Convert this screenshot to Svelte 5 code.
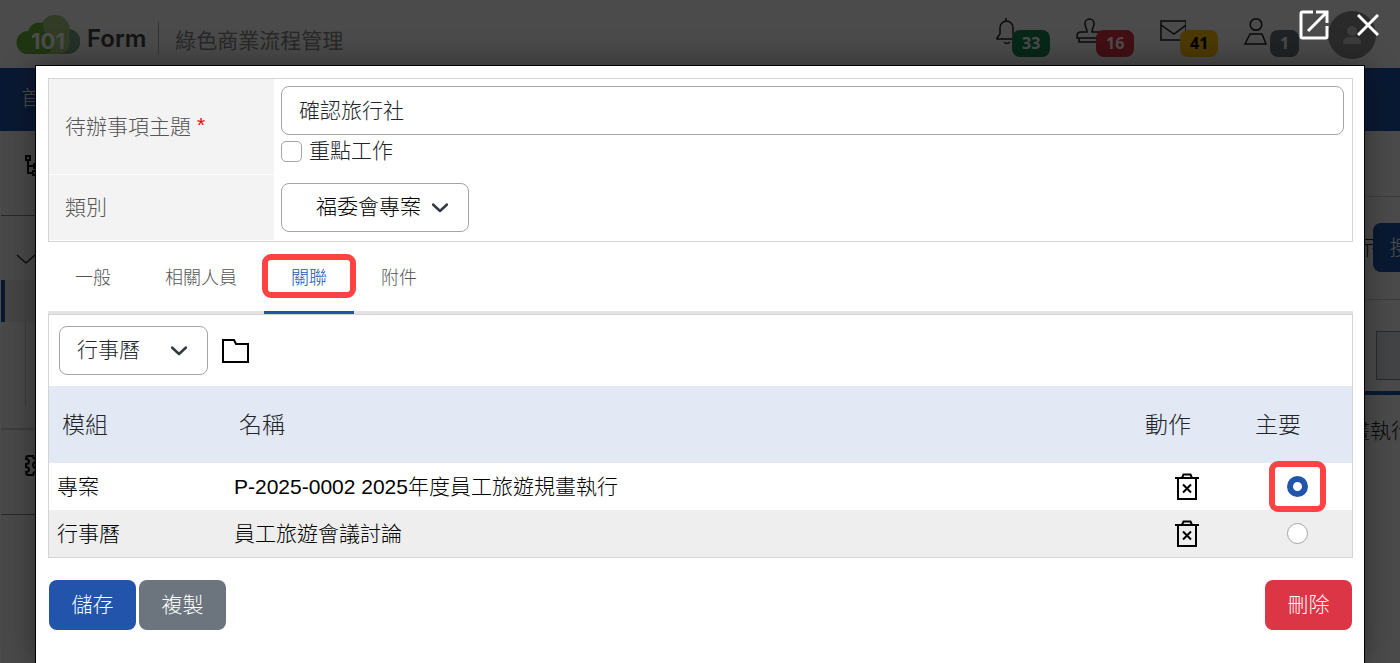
<script>
  const notices = [
    { icon: 'bell', label: '通知', count: 33, tone: 'green', width: 28 },
    { icon: 'stamp', label: '簽核', count: 16, tone: 'red', width: 28 },
    { icon: 'mail', label: '訊息', count: 41, tone: 'yellow', width: 28 },
    { icon: 'user', label: '線上人員', count: 1, tone: 'gray', width: 34 }
  ];

  const tabs = ['一般', '相關人員', '關聯', '附件'];
  let activeTab = $state('關聯');

  let subject = $state('確認旅行社');
  let important = $state(false);
  let category = $state('福委會專案');
  let moduleType = $state('行事曆');

  let links = $state([
    { id: 1, module: '專案', name: 'P-2025-0002 2025年度員工旅遊規畫執行' },
    { id: 2, module: '行事曆', name: '員工旅遊會議討論' }
  ]);
  let mainLink = $state(1);

  function removeLink(id) {
    links = links.filter((l) => l.id !== id);
  }
</script>

<div class="page">
  <header>
    <svg class="logo" viewBox="0 0 64 40" aria-hidden="true">
      <path d="M46 14h6a12 12 0 0 1 0 25H28z" fill="#7ba585" />
      <circle cx="39" cy="15" r="15" fill="#a3c77d" />
      <rect x="24" y="15" width="30" height="24" rx="12" fill="#a3c77d" />
      <path d="M12 39a11.500 11.500 0 0 1 0-23 12 12 0 0 1 15-8c0 8 4 13 9 17v4q0 10-8 10z" fill="#6cb33f" />
      <text x="32" y="34" text-anchor="middle">101</text>
    </svg>
    <span class="brand">Form</span>
    <span class="slogan">綠色商業流程管理</span>
    <div class="notices">
      {#each notices as n}
        <button type="button" class="notice" aria-label={n.label}>
          <svg width={n.width} height="28" viewBox="0 0 {n.width} 28" fill="none" stroke="#222" stroke-width="1.5">
            {#if n.icon === 'bell'}
              <path d="M16 1v3M7 22v-1l3-4v-6a6.500 7 0 0 1 13 0v6l3 4v1zM14 25q3 3 6 0" />
            {:else if n.icon === 'stamp'}
              <path d="M13 15c0-4-2-5-2-8.500a4.500 4.500 0 0 1 9 0c0 3.500-2 4.500-2 8.500h8q2 0 2 3v3H3v-2q0-4 4-4zM5 21v4h22v-4" />
            {:else if n.icon === 'mail'}
              <path d="M3 4h25v19H3zM3 8l13 9 12-9" />
            {:else}
              <path d="M8 17h12l4 10H3z" />
              <circle cx="14" cy="7.500" r="5.800" />
            {/if}
          </svg>
          <span class="badge {n.tone}">{n.count}</span>
        </button>
      {/each}
    </div>
    <div class="avatar">
      <svg width="48" height="48" viewBox="0 0 48 48" fill="#c8c8cc">
        <circle cx="24" cy="20" r="5" />
        <path d="M15 33v-2c0-4 5-5 9-5s9 1 9 5v2z" />
      </svg>
    </div>
  </header>
  <nav><a href="#home">首頁</a></nav>
  <div class="body">
    <aside>
      <div class="side-item">
        <svg width="28" height="28" viewBox="0 0 28 28" fill="none" stroke="#111" stroke-width="2">
          <path d="M3 4h4v4H3zM10 19h4v4h-4zM5 8v13h5M5 14h5M11 12h4v4h-4zM12 6h10" />
        </svg>
      </div>
      <div class="side-tree">
        <svg width="20" height="12" viewBox="0 0 20 12" fill="none" stroke="#333" stroke-width="1.500">
          <path d="M1 2l9 8 9-8" />
        </svg>
        <div class="current"></div>
        <div class="branch"></div>
      </div>
      <div class="side-item">
        <svg width="28" height="28" viewBox="0 0 28 28" fill="none" stroke="#111" stroke-width="2">
          <path d="M10 5H5q-2 0-2 3 3 0 3 2.500T3 13v3q3 0 3 2.500T3 21q0 3 2 3h5q0-3 3-3t3 3h5v-5q-3 0-3-3v-2q0-3 3-3V5h-5q0 3-3 3t-3-3z" />
          <circle cx="13" cy="14" r="3" />
        </svg>
      </div>
    </aside>
    <main>
      <div class="blank"></div>
      <div class="search">示<button type="button">搜尋</button></div>
      <div class="tools"><span></span></div>
      <p>規畫執行</p>
    </main>
  </div>
</div>

<div class="overlay">
  <div class="window-tools">
    <button type="button" aria-label="另開視窗">
      <svg width="32" height="32" viewBox="0 0 32 32" fill="none" stroke="#fff" stroke-width="3">
        <path d="M15 3H4.500Q3 3 3 4.500v23Q3 29 4.500 29h23q1.500 0 1.500-1.500V17" />
        <path d="M18 3h11v11M29 3L10 22" />
      </svg>
    </button>
    <button type="button" aria-label="關閉">
      <svg width="22" height="22" viewBox="0 0 22 22" fill="none" stroke="#fff" stroke-width="3">
        <path d="M1 1l20 20M21 1L1 21" />
      </svg>
    </button>
  </div>

  <div class="dialog" role="dialog" aria-label="待辦事項">
    <div class="fields">
      <label class="name" for="subject">待辦事項主題 <span class="required">*</span></label>
      <div class="value">
        <input id="subject" type="text" bind:value={subject} />
        <label class="check"><input type="checkbox" bind:checked={important} /><span>重點工作</span></label>
      </div>
      <label class="name" for="category">類別</label>
      <div class="value">
        <div class="select category">
          <select id="category" bind:value={category}>
            <option>福委會專案</option>
          </select>
          {@render chevron()}
        </div>
      </div>
    </div>

    <div class="tabs" role="tablist">
      {#each tabs as tab}
        <button type="button" role="tab" aria-selected={tab === activeTab} class:active={tab === activeTab} onclick={() => (activeTab = tab)}>
          {tab}
        </button>
      {/each}
    </div>

    <div class="panel">
      <div class="picker">
        <div class="select module">
          <select aria-label="模組" bind:value={moduleType}>
            <option>行事曆</option>
            <option>專案</option>
          </select>
          {@render chevron()}
        </div>
        <button type="button" aria-label="選擇">
          <svg width="27" height="24" viewBox="0 0 27 24" fill="none" stroke="#000" stroke-width="2">
            <path d="M1 1h11l2 4h12v18H1z" />
          </svg>
        </button>
      </div>
      <table>
        <thead>
          <tr>
            <th class="col-module">模組</th>
            <th>名稱</th>
            <th class="col-small">動作</th>
            <th class="col-small">主要</th>
          </tr>
        </thead>
        <tbody>
          {#each links as link (link.id)}
            <tr>
              <td>{link.module}</td>
              <td>{link.name}</td>
              <td class="center">
                <button type="button" aria-label="刪除關聯" onclick={() => removeLink(link.id)}>
                  <svg width="24" height="28" viewBox="0 0 24 28" fill="none" stroke="#000" stroke-width="2">
                    <path d="M0 5h24M7 5l1.500-3.500h7L17 5M3 5v21h18V5M8 11.500l8 8M16 11.500l-8 8" />
                  </svg>
                </button>
              </td>
              <td class="center">
                <span class="main-pick" class:marked={mainLink === link.id}>
                  <input type="radio" name="main" aria-label="主要" value={link.id} bind:group={mainLink} />
                </span>
              </td>
            </tr>
          {/each}
        </tbody>
      </table>
    </div>

    <div class="actions">
      <button type="button" class="save">儲存</button>
      <button type="button" class="copy">複製</button>
      <button type="button" class="delete">刪除</button>
    </div>
  </div>
</div>

{#snippet chevron()}
  <svg class="chevron" width="16" height="10" viewBox="0 0 16 10" fill="none" stroke="#343a40" stroke-width="2.500" stroke-linecap="round" stroke-linejoin="round">
    <path d="M1 1.500l7 6.500 7-6.500" />
  </svg>
{/snippet}

<style>
  :global(body) {
    overflow: hidden;
  }
  .page, .overlay {
    position: fixed;
    inset: 0;
    font-family: "Liberation Sans", "Noto Sans CJK TC", sans-serif;
    font-size: 21px;
    font-weight: 300;
    color: #212529;
  }
  button, input, select {
    font: inherit;
    color: inherit;
    margin: 0;
  }
  button {
    padding: 0;
    border: 0;
    background: none;
    cursor: pointer;
  }
  svg {
    display: block;
    flex: none;
  }

  /* page behind the dialog */
  .page {
    display: flex;
    flex-direction: column;
    overflow: hidden;
    background: #fafafa;
  }
  header {
    display: flex;
    align-items: center;
    height: 68px;
    padding: 2px 24px 0 16px;
    box-sizing: border-box;
  }
  .logo {
    width: 64px;
    height: 40px;
  }
  .logo text {
    font: 700 22px "Inter", sans-serif;
    fill: #fff;
  }
  .brand {
    margin: 6px 0 0 7px;
    padding: 2px 12px 0 0;
    font: 600 24px/30px "Inter", sans-serif;
    color: #444;
    border-right: 1px solid #aaa;
  }
  .slogan {
    margin-left: 16px;
    padding-top: 8px;
    font-weight: 400;
    color: #888;
  }
  .notices {
    display: flex;
    margin-left: auto;
    padding-top: 4px;
  }
  .notice {
    display: flex;
    width: 84px;
    height: 40px;
  }
  .badge {
    align-self: flex-end;
    margin-left: -6px;
    padding: 0 10px;
    border-radius: 8px;
    font: 700 16px/27px "Noto Sans", sans-serif;
    color: #fff;
  }
  .badge.green { background: #198754; }
  .badge.red { background: #dc3545; }
  .badge.yellow { background: #ffc107; color: #000; }
  .badge.gray { background: #6c757d; }
  .avatar {
    margin-left: 2px;
    border-radius: 50%;
    background: #8c8c92;
  }
  nav {
    height: 63px;
    padding-left: 21px;
    line-height: 60px;
    box-sizing: border-box;
    background: #2254ab;
  }
  nav a {
    color: #fff;
    text-decoration: none;
  }
  .body {
    display: flex;
    flex: 1;
  }
  aside {
    width: 260px;
    background: #f4f4f4;
    border-left: 1px solid #fff;
  }
  .side-item {
    display: flex;
    align-items: center;
    height: 85px;
    padding: 0 0 14px 22px;
    box-sizing: border-box;
    border-bottom: 1px solid #888;
  }
  .side-tree {
    border-bottom: 2px solid #ccc;
  }
  .side-tree svg {
    margin: 37px 0 15px 15px;
  }
  .current {
    height: 42px;
    border-left: 4px solid #2254ab;
    background: #e6e6e6;
  }
  .branch {
    height: 84px;
    margin: 0 0 22px 24px;
    border-left: 1px solid #ccc;
  }
  main {
    flex: 1;
    margin-right: -48px;
    text-align: right;
  }
  .blank {
    height: 65px;
    border-bottom: 1px solid #ccc;
  }
  .search {
    height: 102px;
    line-height: 102px;
    border-bottom: 1px solid #ccc;
  }
  .search button {
    width: 75px;
    height: 49px;
    margin-left: -5px;
    line-height: 49px;
    border-radius: 8px;
    background: #2254ab;
    color: #fff;
  }
  .tools {
    display: flex;
    justify-content: flex-end;
    padding: 31px 0 11px;
    border-bottom: 4px solid #2254ab;
  }
  .tools span {
    width: 70px;
    height: 47px;
    border: 1px solid #888f99;
    background: #dfe3ea;
  }
  p {
    margin: 0;
    padding: 19px 36px 0 0;
  }

  /* dialog */
  .overlay {
    display: flex;
    flex-direction: column;
    padding: 0 35px;
    background: rgba(0, 0, 0, 0.7);
  }
  .window-tools {
    display: flex;
    justify-content: flex-end;
    align-items: center;
    flex: none;
    gap: 27px;
    height: 49px;
    margin: 0 -14px 16px 0;
  }
  .dialog {
    flex: 1;
    padding: 12px 11px 12px 12px;
    border: 1px solid #000;
    border-bottom: 0;
    background: #fff;
    box-shadow: 0 0 30px rgba(0, 0, 0, 0.4);
  }
  .fields {
    display: grid;
    grid-template-columns: 225px 1fr;
    row-gap: 1px;
    padding-bottom: 1px;
    border: 1px solid #d3d4d8;
  }
  .name {
    display: flex;
    align-items: center;
    gap: 6px;
    padding: 0 0 4px 16px;
    background: #f3f3f3;
    color: #555;
  }
  .required {
    color: #f00;
  }
  .value {
    padding: 7px 8px 7px 7px;
  }
  .value:last-child {
    padding: 8px 7px;
  }
  .value input[type='text'] {
    display: block;
    width: 100%;
    height: 49px;
    padding: 0 17px 4px;
    box-sizing: border-box;
    border: 1px solid #a5a5a8;
    border-radius: 8px;
  }
  .check {
    display: flex;
    align-items: center;
    gap: 7px;
    height: 32px;
  }
  .check span {
    padding-bottom: 4px;
  }
  input[type='checkbox'], input[type='radio'] {
    appearance: none;
    width: 21px;
    height: 21px;
    border: 1px solid #a5a5a8;
    border-radius: 5px;
    background: #fff;
  }
  input[type='checkbox']:checked {
    background: #2254ab;
  }
  input[type='radio'] {
    display: block;
    border-radius: 50%;
  }
  input[type='radio']:checked {
    border: 6px solid #2254ab;
  }
  .select {
    display: grid;
    align-items: center;
    height: 49px;
  }
  .select select, .chevron {
    grid-area: 1 / 1;
  }
  .select select {
    appearance: none;
    width: 100%;
    height: 49px;
    border: 1px solid #a5a5a8;
    border-radius: 8px;
    background: #fff;
  }
  .chevron {
    justify-self: end;
    margin-right: 21px;
    pointer-events: none;
  }
  .category {
    width: 188px;
  }
  .category select {
    padding: 0 34px 2px;
    color: #000;
  }
  .module {
    width: 149px;
  }
  .module select {
    padding: 0 17px 2px;
  }
  .tabs {
    display: flex;
    height: 72px;
    box-sizing: border-box;
    border-bottom: 3px solid #e3e3e6;
  }
  .tabs button {
    position: relative;
    margin-bottom: -3px;
    padding: 0 27px 2px;
    border-bottom: 3px solid transparent;
    font-size: 18px;
    color: #555;
  }
  .tabs .active {
    border-color: #2254ab;
    color: #2254ab;
  }
  .tabs .active::after {
    content: '';
    position: absolute;
    inset: 12px -2px 13px;
    border: 6px solid #ff4343;
    border-radius: 9px;
  }
  .panel {
    border: 1px solid #d3d4d8;
  }
  .picker {
    display: flex;
    align-items: center;
    gap: 14px;
    padding: 11px 10px;
  }
  table {
    width: 100%;
    border-collapse: collapse;
    table-layout: fixed;
    color: #000;
  }
  th {
    height: 77px;
    padding: 0 13px 4px;
    box-sizing: border-box;
    background: #e2e8f4;
    color: #212529;
    font-size: 23px;
    font-weight: 300;
    text-align: left;
  }
  .col-module {
    width: 177px;
  }
  .col-small {
    width: 110px;
  }
  td {
    height: 47px;
    padding: 0 8px 4px;
    box-sizing: border-box;
  }
  td.center {
    padding: 0;
  }
  tbody tr:nth-child(even) {
    background: #eee;
  }
  .center > * {
    display: block;
    width: fit-content;
    margin: 0 auto;
  }
  .main-pick {
    position: relative;
  }
  .marked::after {
    content: '';
    position: absolute;
    inset: -15px -18px;
    border: 6px solid #ff4343;
    border-radius: 9px;
    pointer-events: none;
  }
  .actions {
    display: flex;
    gap: 3px;
    padding: 22px 1px;
  }
  .actions button {
    width: 87px;
    height: 50px;
    padding-bottom: 4px;
    border-radius: 8px;
    color: #fff;
  }
  .save { background: #2254ab; }
  .copy { background: #6c757d; }
  .actions .delete {
    margin-left: auto;
    background: #dc3545;
  }
</style>
